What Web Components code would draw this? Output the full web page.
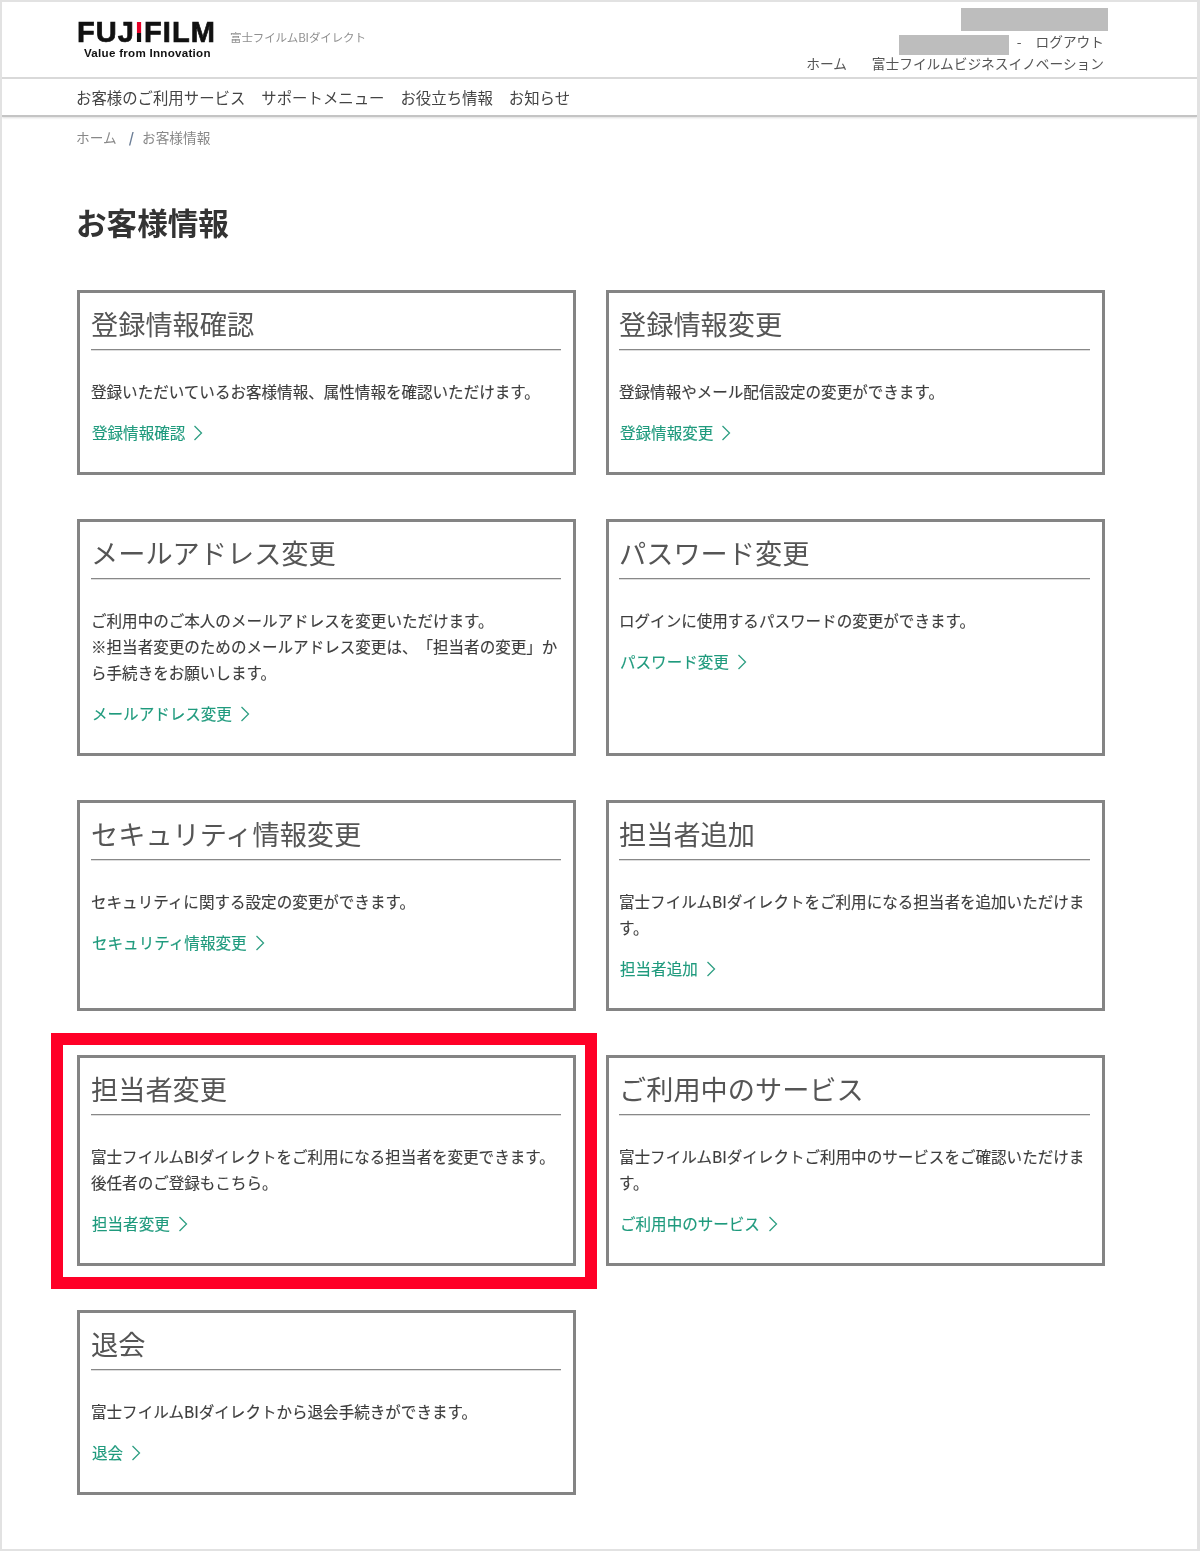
<!DOCTYPE html>
<html lang="ja"><head><meta charset="utf-8"><title>お客様情報</title>
<style>
html,body{margin:0;background:#fff}
body{font-family:"Noto Sans CJK JP","Noto Sans",sans-serif;color:#444;text-spacing-trim:space-all}
</style></head>
<body>
<fb-frame>
  <fb-header></fb-header>
  <fb-nav>
    <a>お客様のご利用サービス</a><a>サポートメニュー</a><a>お役立ち情報</a><a>お知らせ</a>
  </fb-nav>
  <fb-crumbs></fb-crumbs>
  <fb-page heading="お客様情報">
    <fb-card heading="登録情報確認" link="登録情報確認">登録いただいているお客様情報、属性情報を確認いただけます。</fb-card>
    <fb-card heading="登録情報変更" link="登録情報変更">登録情報やメール配信設定の変更ができます。</fb-card>
    <fb-card heading="メールアドレス変更" link="メールアドレス変更">ご利用中のご本人のメールアドレスを変更いただけます。<br>※担当者変更のためのメールアドレス変更は、「担当者の変更」か<br>ら手続きをお願いします。</fb-card>
    <fb-card heading="パスワード変更" link="パスワード変更">ログインに使用するパスワードの変更ができます。</fb-card>
    <fb-card heading="セキュリティ情報変更" link="セキュリティ情報変更">セキュリティに関する設定の変更ができます。</fb-card>
    <fb-card heading="担当者追加" link="担当者追加">富士フイルムBIダイレクトをご利用になる担当者を追加いただけます。</fb-card>
    <fb-card heading="担当者変更" link="担当者変更" marked>富士フイルムBIダイレクトをご利用になる担当者を変更できます。<br>後任者のご登録もこちら。</fb-card>
    <fb-card heading="ご利用中のサービス" link="ご利用中のサービス">富士フイルムBIダイレクトご利用中のサービスをご確認いただけます。</fb-card>
    <fb-card heading="退会" link="退会">富士フイルムBIダイレクトから退会手続きができます。</fb-card>
  </fb-page>
</fb-frame>
<script>
function define(name, css, html){
  customElements.define(name, class extends HTMLElement{
    constructor(){super();const r=this.attachShadow({mode:"open"});r.innerHTML=`<style>${css}</style>${typeof html==="function"?html(this):html}`;}
    connectedCallback(){
      if(typeof html==="function"){this.shadowRoot.innerHTML=`<style>${css}</style>${html(this)}`;}
    }
  });
}
define("fb-frame",`:host{display:block;box-sizing:border-box;height:1551px;border:2px solid #e2e2e2;border-right-width:3px;overflow:hidden}`,`<slot></slot>`);
define("fb-header",`
:host{display:flex;justify-content:space-between;box-sizing:border-box;height:77px;padding:0 93px 0 75px;border-bottom:2px solid #d9d9d9}
.brand{display:flex;align-items:flex-start;filter:blur(.4px)}
.logo{width:145px;margin-top:14px;color:#111}
.mark{font:700 29px/32px "Liberation Sans",sans-serif;letter-spacing:1.05px;display:block;white-space:nowrap;-webkit-text-stroke:.7px #111}
.dot{background:linear-gradient(#e60027 0 52%,#111 52%);-webkit-background-clip:text;background-clip:text;color:transparent;-webkit-text-stroke:0}
.tag{font:700 11.6px/13px "Liberation Sans",sans-serif;display:block;margin:-2px 0 0 7px;white-space:nowrap;letter-spacing:.27px}
.svc{font-size:11.5px;line-height:16px;color:#8f8f8f;margin:27px 0 0 8px;white-space:nowrap;letter-spacing:-.1px}
.side{display:flex;flex-direction:column;align-items:flex-end;font-size:13.7px;line-height:20px;color:#555;padding-top:6px}
.r1{width:147px;height:23px;background:#bdbdbd;margin-right:-4px}
.r2{display:flex;align-items:center;height:21px;margin-top:3px}
.r2 i{display:block;width:110px;height:20px;background:#bdbdbd;margin-right:8px}
.r2>span,.r3{filter:blur(.4px)}
.r2>span{margin-top:-8px;display:flex;gap:14px}
.r3{display:flex;gap:25px;height:21px;margin-top:-2px}
`,`<div class="brand"><div class="logo"><span class="mark">FUJ<span class="dot">I</span>FILM</span><span class="tag">Value from Innovation</span></div><div class="svc">富士フイルムBIダイレクト</div></div>
<div class="side"><div class="r1"></div><div class="r2"><i></i><span><span>-</span><span>ログアウト</span></span></div><div class="r3"><span>ホーム</span><span>富士フイルムビジネスイノベーション</span></div></div>`);
define("fb-nav",`
:host{display:flex;gap:16px;box-sizing:border-box;height:38px;padding:0 0 0 74px;align-items:center;font-size:15.4px;color:#444;border-bottom:2px solid #c4c4c4;box-shadow:0 1px 2px #ddd}
::slotted(a){filter:blur(.4px);white-space:nowrap}
`,`<slot></slot>`);
define("fb-crumbs",`
:host{display:flex;padding:10px 0 0 74px;font-size:13.7px;line-height:20px;color:#888;filter:blur(.4px)}
b{font-weight:700;margin:0 8px 0 12px;color:#6d7f97}
`,`<span>ホーム</span><b>/</b><span>お客様情報</span>`);
define("fb-page",`
:host{display:block;padding:0 0 0 75px}
h1{margin:0 0 0 -1px;padding-top:52px;font-size:30.6px;line-height:46px;font-weight:700;color:#333;height:91px;box-sizing:content-box;filter:blur(.35px)}
.grid{display:grid;grid-template-columns:499px 499px;column-gap:30px;row-gap:44px}
`,el=>`<h1>${el.getAttribute("heading")||""}</h1><div class="grid"><slot></slot></div>`);
define("fb-card",`
:host{display:block;position:relative;box-sizing:border-box;border:3px solid #848484;padding:0 12px 27px 11px;background:#fff}
:host(:nth-of-type(even)){padding-left:10px;padding-right:12px}
h2{margin:0;height:56px;box-sizing:border-box;padding-top:10px;font-size:27.2px;line-height:40px;font-weight:400;color:#555;white-space:nowrap;filter:blur(.35px)}
hr{margin:0 0 28px;border:0;height:1px;background:#888;box-shadow:0 .5px 0 #bbb}
.d{font-size:15.55px;line-height:26px;color:#3d3d3d;filter:blur(.4px);min-height:26px;-webkit-text-stroke:.15px #3d3d3d}
.l{display:flex;align-items:center;gap:8px;margin:15px 0 0 1px;height:26px;font-size:15.55px;color:#1f9a7d}
.l span{filter:blur(.4px);white-space:nowrap;-webkit-text-stroke:.15px #1f9a7d}
svg{display:block;width:10px;height:16px;margin-top:2px}
.mark{position:absolute;left:-29px;right:-24px;top:-25px;bottom:-26px;border:12px solid #ff0027;pointer-events:none}
`,el=>`<h2>${el.getAttribute("heading")}</h2><hr><div class="d"><slot></slot></div><div class="l"><span>${el.getAttribute("link")}</span><svg viewBox="0 0 10 16"><path d="M1.5 1 L8.5 8 L1.5 15" fill="none" stroke="#2f9f83" stroke-width="1.3"/></svg></div>${el.hasAttribute("marked")?'<div class="mark"></div>':""}`);
</script>
</body></html>
